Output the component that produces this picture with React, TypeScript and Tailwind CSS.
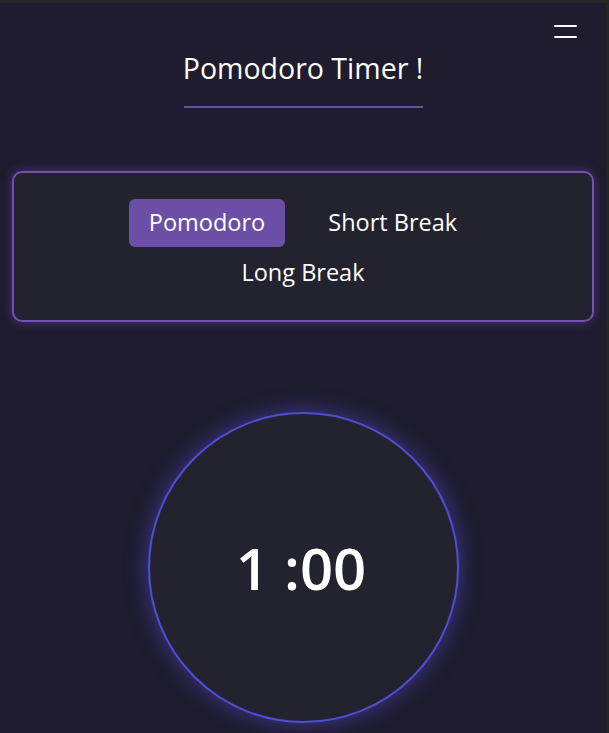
import React from "react";

export default function App() {
  return (
    <div
      className="flex h-[733px] w-[609px] flex-col overflow-hidden bg-[#252526]"
      style={{ fontFamily: "'Open Sans', 'Noto Sans', sans-serif" }}
    >
      <div className="mt-[3px] flex h-[730px] w-[606px] flex-col bg-[#1e1c2e] text-white">
        {/* hamburger */}
        <div className="flex justify-end pr-[29px] pt-[22px]">
          <div className="flex w-[23px] flex-col gap-[9px]">
            <div className="h-[2px] w-full rounded bg-white" />
            <div className="h-[2px] w-full rounded bg-white" />
          </div>
        </div>
        {/* title */}
        <div className="mt-[12px] flex flex-col items-center">
          <h1 className="text-[28.5px] leading-[36px] text-white">Pomodoro Timer !</h1>
          <div className="mt-[20px] h-[2px] w-[239px] bg-[#6b4fa6]" />
        </div>
        {/* card */}
        <div className="mx-[12px] mt-[63px] h-[151px] rounded-[10px] border-2 border-[#6f52b2] bg-[#23232f] pt-[26px] shadow-[0_0_12px_rgba(120,80,200,0.45)]">
          <div className="mx-auto flex max-w-[380px] flex-wrap justify-center gap-x-[23px] gap-y-[2px]">
            <button className="h-[48px] rounded-[6px] bg-[#6b4fa6] px-[20px] text-[23.5px] text-white">
              Pomodoro
            </button>
            <button className="h-[48px] rounded-[6px] px-[20px] text-[23.5px] text-white">
              Short Break
            </button>
            <button className="h-[48px] rounded-[6px] px-[20px] text-[23.5px] text-white">
              Long Break
            </button>
          </div>
        </div>
        {/* timer */}
        <div className="mt-[90px] flex justify-center">
          <div className="flex h-[311px] w-[311px] items-center justify-center rounded-full border-2 border-[#4e4ed2] bg-[#23232f] shadow-[0_0_22px_rgba(90,80,230,0.55)]">
            <span className="ml-[-4px] text-[58px] font-semibold leading-none text-white">
              1 :00
            </span>
          </div>
        </div>
      </div>
    </div>
  );
}
